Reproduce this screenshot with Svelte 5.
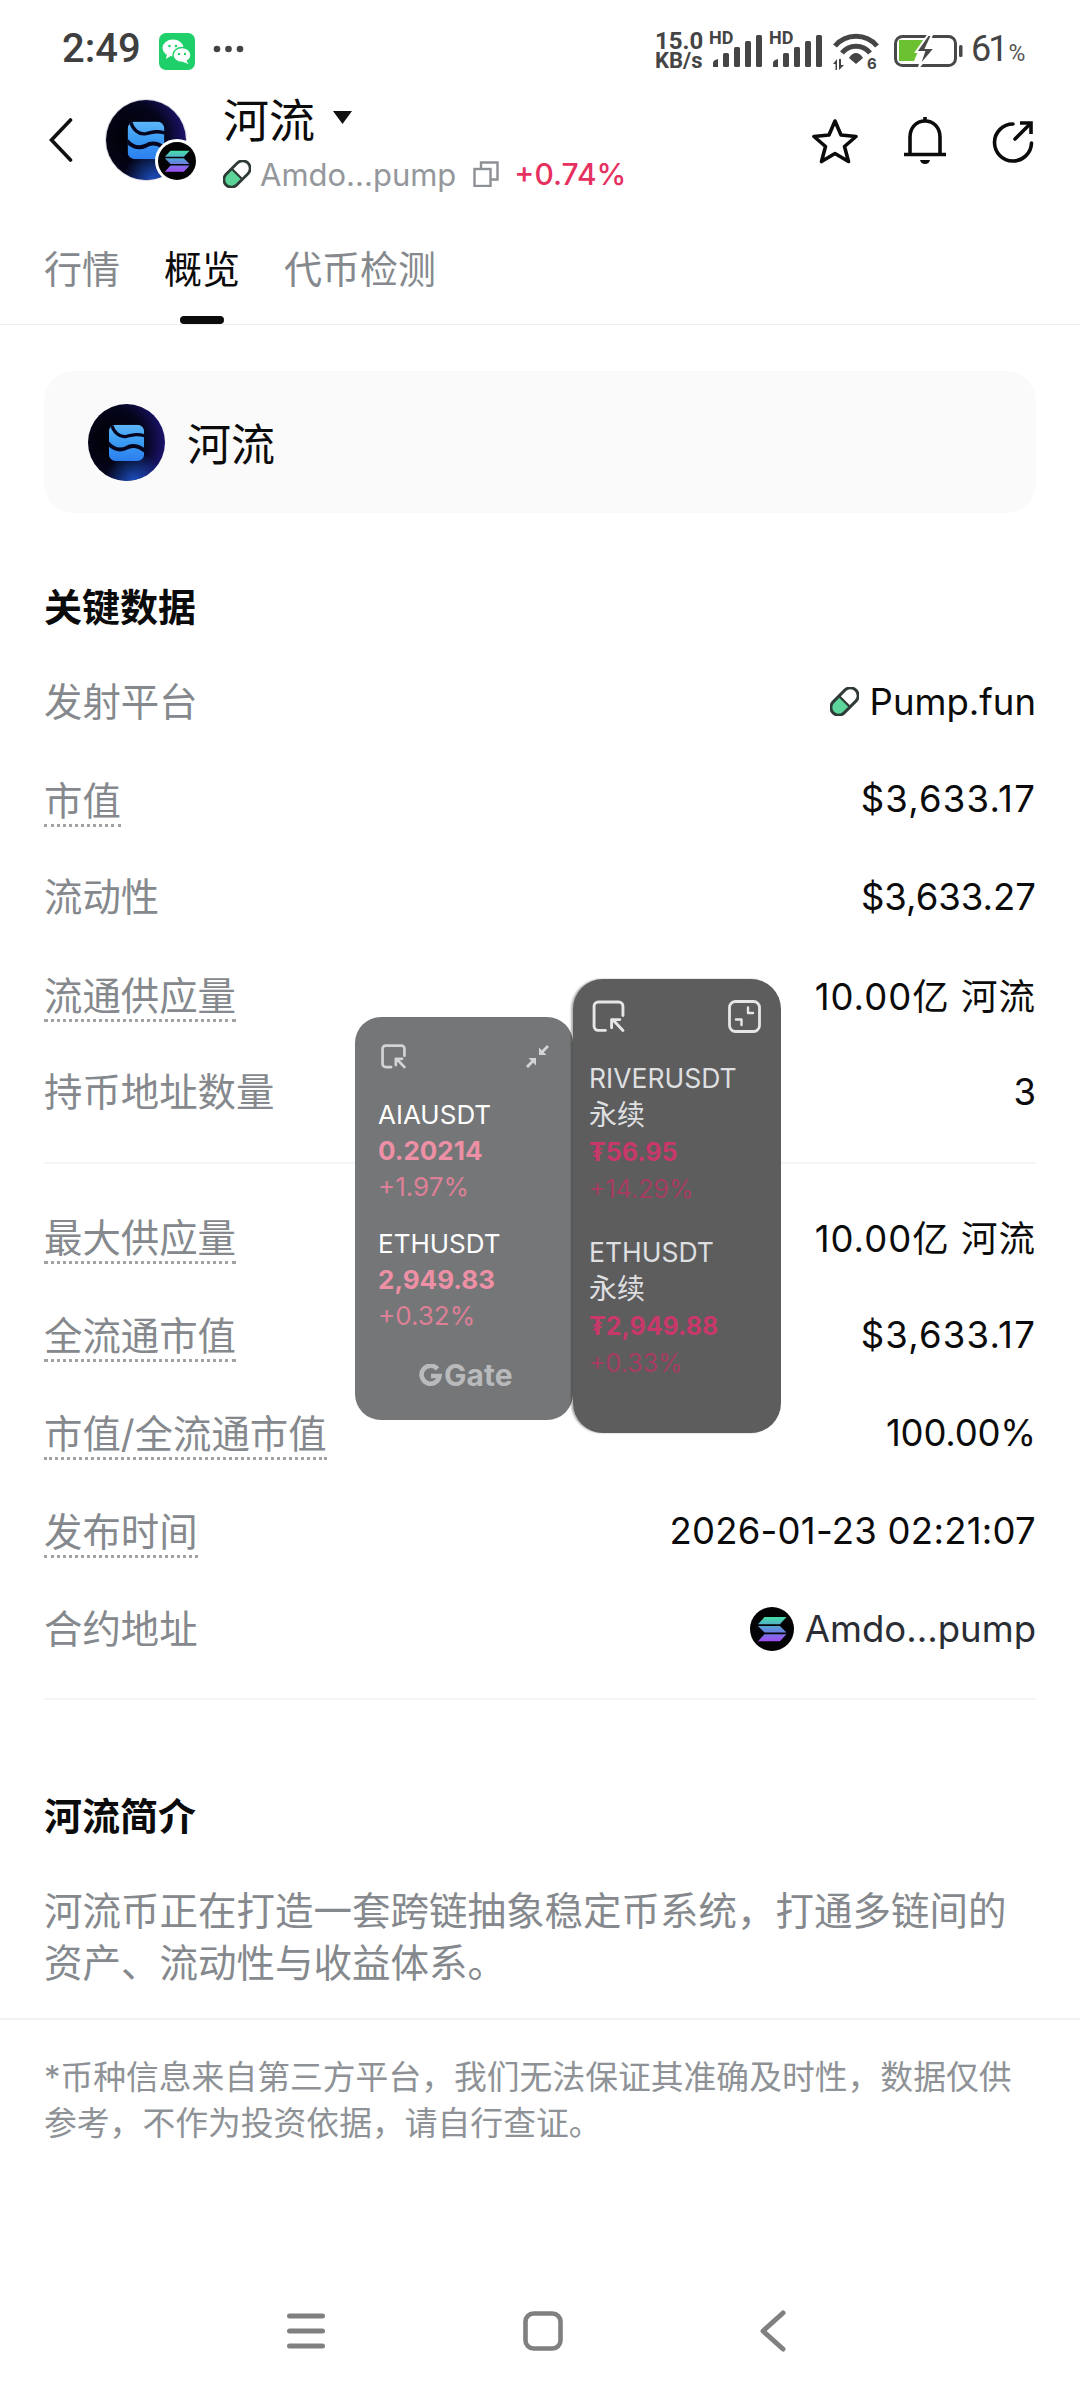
<script>
  const groupA = [
    { label: '发射平台', value: 'Pump.fun', icon: 'pill' },
    { label: '市值', value: '$3,633.17', dotted: true, fit: 'ones' },
    { label: '流动性', value: '$3,633.27' },
    { label: '流通供应量', value: '10.00亿 河流', dotted: true, fit: 'qty' },
    { label: '持币地址数量', value: '3' }
  ];
  const groupB = [
    { label: '最大供应量', value: '10.00亿 河流', dotted: true, fit: 'qty' },
    { label: '全流通市值', value: '$3,633.17', dotted: true, fit: 'ones' },
    { label: '市值/全流通市值', value: '100.00%', dotted: true, fit: 'pctv' },
    { label: '发布时间', value: '2026-01-23 02:21:07', dotted: true, fit: 'date' },
    { label: '合约地址', value: 'Amdo...pump', icon: 'sol', dark: true }
  ];
  const leftQuotes = [
    { name: 'AIAUSDT', price: '0.20214', change: '+1.97%' },
    { name: 'ETHUSDT', price: '2,949.83', change: '+0.32%' }
  ];
  const rightQuotes = [
    { name: 'RIVERUSDT', price: '₮56.95', change: '+14.29%' },
    { name: 'ETHUSDT', price: '₮2,949.88', change: '+0.33%' }
  ];
</script>

{#snippet river(size)}
  <svg class="block" width={size} height={size} viewBox="0 0 100 100">
    <defs>
      <radialGradient id="rv1" cx="30%" cy="48%" r="80%">
        <stop offset="0" stop-color="#000004" />
        <stop offset="0.55" stop-color="#05051c" />
        <stop offset="1" stop-color="#23198a" />
      </radialGradient>
      <radialGradient id="rv2" cx="60%" cy="100%" r="38%">
        <stop offset="0" stop-color="#1c55c8" stop-opacity="0.9" />
        <stop offset="1" stop-color="#1c55c8" stop-opacity="0" />
      </radialGradient>
      <linearGradient id="rv3" x1="0" y1="0" x2="0" y2="1">
        <stop offset="0" stop-color="#5cb6f8" />
        <stop offset="0.5" stop-color="#3a9af3" />
        <stop offset="1" stop-color="#2c7eee" />
      </linearGradient>
      <clipPath id="rv4"><rect x="27" y="27" width="46" height="47" rx="9" /></clipPath>
    </defs>
    <circle cx="50" cy="50" r="50" fill="url(#rv1)" />
    <circle cx="50" cy="50" r="50" fill="url(#rv2)" />
    <g clip-path="url(#rv4)">
      <rect x="27" y="27" width="46" height="47" fill="url(#rv3)" />
      <path d="M30 25 C33 37 41 44 50 42 C58 40 64 38 76 42" fill="none" stroke="#05051e" stroke-width="4.2" />
      <path d="M25 50 C32 58 40 62 50 57 C58 52 66 54 76 62" fill="none" stroke="#05051e" stroke-width="5" />
    </g>
  </svg>
{/snippet}

{#snippet sol(size, id)}
  <svg class="block" width={size} height={size} viewBox="0 0 100 100">
    <defs>
      <linearGradient {id} x1="0" y1="0" x2="0" y2="1">
        <stop offset="0" stop-color="#45e0a8" />
        <stop offset="0.5" stop-color="#5d8fdc" />
        <stop offset="1" stop-color="#a24cf2" />
      </linearGradient>
    </defs>
    <circle cx="50" cy="50" r="50" fill="#030305" />
    <path fill="url(#{id})" d="M33 23 H83 L68 39 H18 Z M18 43 H68 L83 58 H33 Z M33 62 H83 L68 78 H18 Z" />
  </svg>
{/snippet}

{#snippet pill(size)}
  <svg class="block" width={size} height={size} viewBox="0 0 28 28">
    <g transform="rotate(-45 14 14)">
      <path d="M14 6.5 H6 a7.5 7.5 0 0 0 0 15 H14 Z" fill="#5cd59b" />
      <path d="M14 6.5 H22 a7.5 7.5 0 0 1 0 15 H14 Z" fill="#fff" />
      <rect x="-1.5" y="6.5" width="31" height="15" rx="7.5" fill="none" stroke="#2f3b37" stroke-width="2.8" />
      <path d="M14 6.5 V21.5" stroke="#2f3b37" stroke-width="2.2" />
    </g>
  </svg>
{/snippet}

{#snippet bars()}
  <svg class="block" width="50" height="32" viewBox="0 0 50 32" fill="#454545">
    <path d="M1 32 V28 Q1 25 6 24 V32 Z" />
    <rect x="11" y="18" width="6" height="14" rx="1.5" />
    <rect x="22" y="12" width="6" height="20" rx="1.5" />
    <rect x="33" y="6" width="6" height="26" rx="1.5" />
    <rect x="44" y="0" width="6" height="32" rx="1.5" />
  </svg>
{/snippet}

{#snippet pip(size, color, sw)}
  <svg class="block" width={size} height={size} viewBox="0 0 32 32" fill="none" stroke={color} stroke-width={sw} stroke-linecap="round" stroke-linejoin="round">
    <path d="M13 29.5 H6 a4 4 0 0 1 -4 -4 V6 a4 4 0 0 1 4 -4 H26 a4 4 0 0 1 4 4 V15" />
    <path d="M20 19 L30 29.5 M19 27 V19 H27" />
  </svg>
{/snippet}

{#snippet row(r)}
  <div class="row">
    <span class="label" class:dotted={r.dotted}>{r.label}</span>
    <span class="value {r.fit ?? ''}" class:dark={r.dark}>
      {#if r.icon === 'pill'}{@render pill(29)}{/if}
      {#if r.icon === 'sol'}{@render sol(44, 'solrow')}{/if}
      {r.value}
    </span>
  </div>
{/snippet}

<div class="page">
  <div class="status">
    <span class="time">2:49</span>
    <svg class="wechat" width="36" height="37" viewBox="0 0 36 37">
      <rect width="36" height="37" rx="7" fill="#1fd06a" />
      <ellipse cx="14" cy="15" rx="10.5" ry="8.5" fill="#fff" />
      <path d="M8 21 L7 26 L13 22 Z" fill="#fff" />
      <ellipse cx="23" cy="22" rx="9" ry="7.5" fill="#fff" stroke="#1fd06a" stroke-width="1.4" />
      <path d="M27 27 L29.5 31 L23 28.5 Z" fill="#fff" />
      <circle cx="10.5" cy="13" r="1.3" fill="#1fd06a" /><circle cx="17" cy="13" r="1.3" fill="#1fd06a" />
      <circle cx="20" cy="21" r="1.2" fill="#1fd06a" /><circle cx="26" cy="21" r="1.2" fill="#1fd06a" />
    </svg>
    <svg class="dots" width="31" height="8" viewBox="0 0 31 8" fill="#444"><circle cx="4" cy="4" r="3.3" /><circle cx="15.5" cy="4" r="3.3" /><circle cx="27" cy="4" r="3.3" /></svg>
    <div class="status-right">
      <div class="speed"><span>15.0</span><span class="kb">KB/s</span></div>
      <div class="signal"><span class="hd">HD</span>{@render bars()}</div>
      <div class="signal two"><span class="hd">HD</span>{@render bars()}</div>
      <svg class="wifi" width="46" height="42" viewBox="0 0 46 42">
        <g fill="none" stroke="#454545" stroke-width="5">
          <path d="M2 13 C13 0 33 0 44 13" />
          <path d="M9 20 C16 11 30 11 37 20" />
        </g>
        <path d="M23 20 Q19 20 16 25 L23 31 L30 25 Q27 20 23 20 Z" fill="#454545" />
        <path d="M0 31 L4 26 V37 H2.5 V31 Z M6 26 H8 V32 L11 32 L6 37 Z" fill="#454545" />
        <text x="34" y="36" font-size="15" font-weight="700" font-family="Inter, sans-serif" fill="#454545">6</text>
      </svg>
      <svg class="battery" width="69" height="32" viewBox="0 0 69 32">
        <rect x="1.5" y="1.5" width="60" height="29" rx="7" fill="none" stroke="#484848" stroke-width="3" />
        <path d="M5 5 H29 L20 26 H5 Z" fill="#6cc132" />
        <path d="M34 0 L22 17 H30 L25 32 L41 13 H32 L38 0 Z" fill="#484848" stroke="#fff" stroke-width="2" />
        <rect x="65" y="10" width="3.5" height="12" rx="1.5" fill="#484848" />
      </svg>
      <span class="pct">61<small>%</small></span>
    </div>
  </div>

  <header class="header">
    <svg class="back" width="24" height="44" viewBox="0 0 24 44" fill="none" stroke="#111" stroke-width="3.6" stroke-linecap="round"><path d="M21.5 2 L2.5 22 L21.5 42" /></svg>
    <div class="avatar">
      {@render river(80)}
      <div class="badge">{@render sol(38, 'solbadge')}</div>
    </div>
    <div class="ident">
      <div class="name">河流<svg class="caret" width="19" height="13" viewBox="0 0 19 13"><path d="M0 0 H19 L9.5 13 Z" fill="#111" /></svg></div>
      <div class="sub">
        {@render pill(28)}
        <span class="addr">Amdo...pump</span>
        <svg class="copy" width="26" height="26" viewBox="0 0 26 26" fill="none" stroke="#8d9094" stroke-width="2.4"><rect x="1.5" y="8" width="16" height="17" /><path d="M8 8 V1.5 H24.5 V18.5 H17.5" /></svg>
        <span class="up">+0.74%</span>
      </div>
    </div>
    <div class="actions">
      <svg width="46" height="46" viewBox="0 0 46 46" fill="none" stroke="#0b0b0b" stroke-width="3.6" stroke-linejoin="round"><path d="M23 3 L29 17 L44 18.5 L32.5 28.5 L36.5 43.5 L23 35.5 L9.5 43.5 L13.5 28.5 L2 18.5 L17 17 Z" /></svg>
      <svg width="42" height="50" viewBox="0 0 42 50" fill="none" stroke="#0b0b0b" stroke-width="3.6"><path d="M6 38 V21 C6 12 12 5 21 5 C30 5 36 12 36 21 V38" /><path d="M0 38.5 H42" /><path d="M16 44 H26 Q25 48 21 48 Q17 48 16 44 Z" fill="#0b0b0b" stroke="none" /><path d="M21 1 V5" /></svg>
      <svg width="42" height="44" viewBox="0 0 42 44" fill="none" stroke="#0b0b0b" stroke-width="3.6" stroke-linecap="round"><path d="M21 5 A18.5 18.5 0 1 0 39.5 24" /><path d="M23 20 L38 5" /><path d="M28 4 H39 V15" stroke-linecap="butt" /></svg>
    </div>
  </header>

  <nav class="tabs">
    <span class="tab">行情</span>
    <span class="tab active">概览</span>
    <span class="tab">代币检测</span>
  </nav>

  <main class="content">
    <section class="card">
      {@render river(77)}
      <span>河流</span>
    </section>

    <h2 class="title">关键数据</h2>
    <div class="rows first">{#each groupA as r}{@render row(r)}{/each}</div>
    <div class="hr a"></div>
    <div class="rows second">{#each groupB as r}{@render row(r)}{/each}</div>
    <div class="hr b"></div>

    <h2 class="title intro">河流简介</h2>
    <p class="para">河流币正在打造一套跨链抽象稳定币系统，打通多链间的资产、流动性与收益体系。</p>
  </main>

  <div class="rule"></div>
  <p class="foot">*币种信息来自第三方平台，我们无法保证其准确及时性，数据仅供参考，不作为投资依据，请自行查证。</p>

  <div class="nav">
    <svg width="38" height="36" viewBox="0 0 38 36" stroke="#808080" stroke-width="5" stroke-linecap="round"><path d="M2.5 3 H35.5 M2.5 18 H35.5 M2.5 33 H35.5" /></svg>
    <svg width="40" height="40" viewBox="0 0 40 40" fill="none" stroke="#808080" stroke-width="4.6"><rect x="2.5" y="2.5" width="35" height="35" rx="8" /></svg>
    <svg width="26" height="42" viewBox="0 0 26 42" fill="none" stroke="#808080" stroke-width="5" stroke-linecap="round" stroke-linejoin="round"><path d="M23 3 L3 21 L23 39" /></svg>
  </div>

  <aside class="float left">
    <div class="ficons">
      {@render pip(25, '#d3d4d5', 3.4)}
      <svg width="25" height="25" viewBox="0 0 25 25" fill="#d3d4d5"><path d="M14 11 V3.5 L16.8 6.3 L22 1 L24 3 L18.8 8.3 L21.5 11 Z M11 14 V21.5 L8.2 18.7 L3 24 L1 22 L6.2 16.7 L3.5 14 Z" /></svg>
    </div>
    <div class="quotes">
      {#each leftQuotes as q}
        <div class="quote">
          <div class="qname">{q.name}</div>
          <div class="qprice">{q.price}</div>
          <div class="qchange">{q.change}</div>
        </div>
      {/each}
    </div>
    <div class="gate">
      <svg width="23" height="23" viewBox="0 0 23 23" fill="none"><path d="M18.5 5 A9 9 0 1 0 20.5 12 H12" stroke="#b9babc" stroke-width="4.6" /></svg>
      <span>Gate</span>
    </div>
  </aside>

  <aside class="float right">
    <div class="ficons">
      {@render pip(33, '#e6e6e6', 2.8)}
      <svg width="33" height="33" viewBox="0 0 33 33" fill="none" stroke="#e6e6e6" stroke-width="2.8" stroke-linecap="round"><rect x="1.5" y="1.5" width="30" height="30" rx="6" /><path d="M20 7.5 V13 H25 M13.5 25 V19.5 H8" stroke-width="2.4" stroke-linejoin="round" /></svg>
    </div>
    <div class="quotes">
      {#each rightQuotes as q}
        <div class="quote">
          <div class="qname">{q.name}</div>
          <div class="qkind">永续</div>
          <div class="qprice">{q.price}</div>
          <div class="qchange">{q.change}</div>
        </div>
      {/each}
    </div>
  </aside>
</div>

<style>
  :global(body) {
    margin: 0;
    background: #fff;
  }
  .page {
    position: relative;
    width: 1080px;
    height: 2400px;
    overflow: hidden;
    background: #fff;
    font-family: Inter, "Noto Sans CJK SC", sans-serif;
    color: #0b0b0b;
  }
  .block { display: block; }

  .status {
    height: 90px;
    display: flex;
    align-items: center;
    padding: 0 55px 0 62px;
    box-sizing: border-box;
    color: #3f3f3f;
  }
  .time {
    font: 500 40px/1 Roboto, sans-serif;
    width: 97px;
    margin-top: 8px;
  }
  .dots { margin-left: 18px; margin-top: 8px; }
  .wechat { margin-top: 12px; }
  .status-right {
    margin-left: auto;
    display: flex;
    align-items: flex-end;
    height: 38px;
    margin-top: 12px;
  }
  .speed {
    display: flex;
    flex-direction: column;
    font: 700 24px/19px Roboto, sans-serif;
    width: 57px;
    color: #454545;
  }
  .kb { font-size: 22px; }
  .signal {
    position: relative;
    width: 50px;
    margin-right: 10px;
    margin-bottom: 3px;
  }
  .signal.two { margin-right: 11px; }
  .hd {
    position: absolute;
    left: -3px;
    top: -5px;
    font: 700 18px/16px Roboto, sans-serif;
    color: #454545;
  }
  .wifi { margin-right: 15px; margin-bottom: -5px; }
  .battery { margin-bottom: 3px; }
  .pct {
    width: 54px;
    font: 400 36px/38px Roboto, sans-serif;
    margin-left: 8px;
    margin-bottom: -3px;
    letter-spacing: -3px;
    color: #444;
    white-space: nowrap;
  }
  .pct small { font-size: 23px; color: #555; margin-left: 3px; letter-spacing: 0; }

  .header {
    height: 100px;
    display: flex;
    align-items: center;
    padding: 0 46px 0 49px;
  }
  .avatar {
    position: relative;
    margin-left: 32px;
    width: 82px;
    height: 82px;
    display: flex;
    align-items: center;
    justify-content: center;
    border-radius: 50%;
    border: 1px solid #d8d8e0;
    box-sizing: border-box;
  }
  .badge {
    position: absolute;
    right: -13px;
    bottom: -3px;
    width: 38px;
    height: 38px;
    border: 3px solid #fff;
    border-radius: 50%;
    background: #fff;
  }
  .ident {
    margin-left: 36px;
    margin-top: 16px;
    display: flex;
    flex-direction: column;
  }
  .name {
    font-size: 46px;
    line-height: 60px;
    margin-top: -12px;
    display: flex;
    align-items: center;
  }
  .caret { margin-left: 18px; margin-top: -6px; }
  .sub {
    display: flex;
    align-items: center;
    height: 40px;
    margin-top: 4px;
  }
  .addr {
    font-size: 31px;
    color: #94979b;
    margin-left: 9px;
  }
  .copy { margin-left: 17px; }
  .up {
    font-size: 30px;
    font-weight: 500;
    color: #e5315f;
    margin-left: 15px;
  }
  .actions {
    margin-left: auto;
    display: flex;
    align-items: center;
    gap: 46px;
    margin-top: 2px;
  }

  .tabs {
    height: 135px;
    display: flex;
    gap: 44px;
    padding: 0 44px;
    box-sizing: border-box;
    border-bottom: 1px solid #eeeeee;
  }
  .tab {
    position: relative;
    font-size: 38px;
    line-height: 54px;
    margin-top: 52px;
    color: #85898d;
    height: 82px;
  }
  .tab.active { color: #0b0b0b; }
  .tab.active::after {
    content: "";
    position: absolute;
    left: 16px;
    right: 16px;
    bottom: 0;
    height: 8px;
    border-radius: 4px;
    background: #0b0b0b;
  }

  .content { padding: 0 44px; }
  .card {
    margin-top: 46px;
    height: 142px;
    border-radius: 30px;
    background: #fafafa;
    display: flex;
    align-items: center;
    gap: 22px;
    padding-left: 44px;
    font-size: 44px;
  }
  .title {
    margin: 64px 0 0;
    font-size: 38px;
    line-height: 60px;
    font-weight: 700;
  }
  .title.intro { margin-top: 86px; }
  .rows.first { margin-top: 16px; }
  .rows.first .row { height: 97.5px; }
  .rows.second { margin-top: 24px; }
  .row {
    height: 98px;
    display: flex;
    align-items: center;
    justify-content: space-between;
  }
  .label {
    font-size: 38.4px;
    line-height: 50px;
    color: #85898d;
  }
  .label.dotted {
    line-height: 46px;
    margin-top: 6px;
    border-bottom: 3px dotted #a0a3a6;
  }
  .value {
    display: flex;
    align-items: center;
    gap: 11px;
    font-size: 36.5px;
    color: #0b0b0b;
  }
  .value.ones { letter-spacing: 1.2px; }
  .value.qty { letter-spacing: 1px; }
  .value.pctv { letter-spacing: -0.2px; }
  .value.date { letter-spacing: 0.25px; }
  .value.dark { color: #2a2d34; }
  .hr { height: 2px; background: #f5f5f5; }
  .hr.a { margin-top: 21px; }
  .hr.b { margin-top: 20px; }
  .para {
    margin: 39px 0 0;
    font-size: 38.5px;
    line-height: 52px;
    color: #85898d;
  }
  .rule {
    height: 2px;
    background: #f2f2f2;
    margin-top: 29px;
  }
  .foot {
    margin: 34px 44px 0;
    font-size: 32.8px;
    line-height: 46px;
    color: #8e9296;
  }
  .nav {
    position: absolute;
    left: 287px;
    right: 294px;
    bottom: 48px;
    height: 42px;
    display: flex;
    align-items: center;
    justify-content: space-between;
  }

  .float {
    position: absolute;
    box-sizing: border-box;
    font-family: Inter, "Noto Sans CJK SC", sans-serif;
  }
  .float.left {
    left: 355px;
    top: 1017px;
    width: 218px;
    height: 403px;
    background: #747678;
    border-radius: 26px;
    padding: 27px 23px 0 23px;
    color: #fff;
  }
  .float.right {
    left: 573px;
    top: 979px;
    width: 208px;
    height: 454px;
    background: #5d5d5d;
    border-radius: 30px;
    padding: 21px 20px 0 16px;
    color: #dedfe0;
    box-shadow: -2px 0 2px rgba(0, 0, 0, 0.3);
  }
  .ficons {
    display: flex;
    justify-content: space-between;
  }
  .left .ficons { padding: 0 0 0 3px; }
  .right .ficons { padding: 0 0 0 3px; }
  .quotes { display: flex; flex-direction: column; }
  .left .quotes { margin-top: 28px; gap: 21px; font-size: 26px; line-height: 36px; }
  .right .quotes { margin-top: 27px; gap: 26px; font-size: 25px; line-height: 37px; }
  .right .qname { font-size: 26.5px; }
  .right .qkind { font-size: 28px; }
  .qname { white-space: nowrap; }
  .qprice { font-weight: 700; white-space: nowrap; }
  .left .qprice { color: #ee90a5; }
  .left .qchange { color: #dd7f96; }
  .right .qprice { color: #c8386a; }
  .right .qchange { color: #a73c62; }
  .gate {
    margin-top: 26px;
    display: flex;
    align-items: center;
    gap: 2px;
    padding-left: 41px;
    color: #b9babc;
    font-size: 30px;
    line-height: 30px;
    font-weight: 700;
  }
</style>
